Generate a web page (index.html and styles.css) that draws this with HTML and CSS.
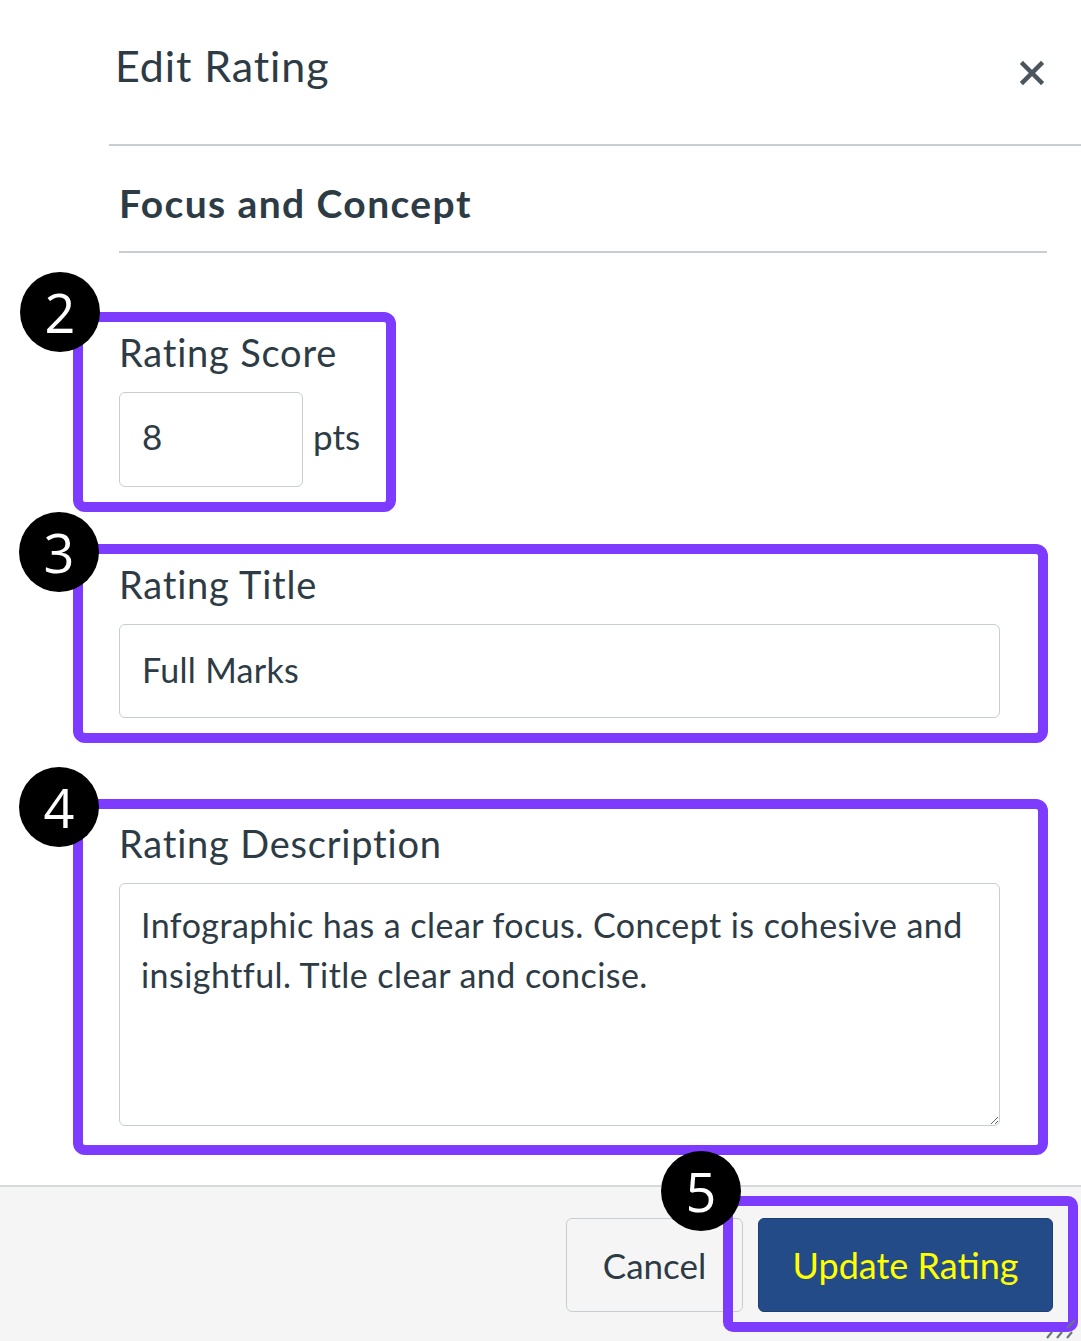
FILE: index.html
```html
<!DOCTYPE html>
<html lang="en">
<head>
    <meta charset="UTF-8">
    <title>Edit Rating</title>
    <link rel="stylesheet" href="styles.css">
</head>
<body>
    <div class="modal">
        <!-- Header -->
        <div class="modal-header">
            <h2 class="modal-title">Edit Rating</h2>
            <button class="close-button" aria-label="Close">
                <svg width="26" height="26" viewBox="0 0 26 26">
                    <path d="M4 4 L22 22 M22 4 L4 22" stroke="#4a555e" stroke-width="4.5" stroke-linecap="square" fill="none"/>
                </svg>
            </button>
        </div>

        <!-- Body -->
        <div class="modal-body">
            <h3 class="criterion">Focus and Concept</h3>

            <div class="field-group field-group--score">
                <span class="step step--top">2</span>
                <label class="field-label" for="score">Rating Score</label>
                <div class="score-row">
                    <input class="text-input score-input" id="score" type="text" value="8">
                    <span class="unit">pts</span>
                </div>
            </div>

            <div class="field-group field-group--title">
                <span class="step">3</span>
                <label class="field-label" for="title">Rating Title</label>
                <input class="text-input title-input" id="title" type="text" value="Full Marks">
            </div>

            <div class="field-group field-group--desc">
                <span class="step">4</span>
                <label class="field-label" for="desc">Rating Description</label>
                <textarea class="text-area" id="desc">Infographic has a clear focus. Concept is cohesive and insightful. Title clear and concise.</textarea>
            </div>
        </div>

        <!-- Footer -->
        <div class="modal-footer">
            <button class="btn btn-cancel">Cancel</button>
            <div class="primary-wrap">
                <span class="step step--footer">5</span>
                <button class="btn btn-primary">Update Rating</button>
                <span class="highlight"></span>
            </div>
            <svg class="grip" width="32" height="22" viewBox="0 0 32 22">
                <path d="M2 20 L7 14 M12 20 L17 14 M22 20 L27 14 M22 10 L30 2" stroke="#6b7780" stroke-width="2.2" fill="none"/>
            </svg>
        </div>
    </div>
</body>
</html>
```

FILE: styles.css
```css
* {
    margin: 0;
    padding: 0;
    box-sizing: border-box;
}

body {
    font-family: Lato, "Open Sans", sans-serif;
    color: #2d3b45;
    background: #fff;
    width: 1081px;
    height: 1341px;
    overflow: hidden;
}

.modal {
    display: flex;
    flex-direction: column;
    height: 100%;
}

/* Header */
.modal-header {
    display: flex;
    justify-content: space-between;
    align-items: flex-start;
    height: 146px;
    margin-left: 109px;
    padding: 40px 36px 0 6px;
    border-bottom: 2px solid #c7cdd1;
}

.modal-title {
    font-size: 43px;
    font-weight: 400;
    line-height: 1.2;
    letter-spacing: 0.9px;
}

.close-button {
    margin-top: 20px;
    width: 26px;
    height: 26px;
    background: none;
    border: none;
    cursor: pointer;
}

/* Body */
.criterion {
    margin: 0 34px 0 119px;
    padding: 35px 0 26px;
    font-size: 39px;
    font-weight: 700;
    line-height: 44px;
    letter-spacing: 1.4px;
    border-bottom: 2px solid #c7cdd1;
}

.field-group {
    position: relative;
    width: 975px;
    margin-left: 73px;
    padding: 8px 38px 15px 36px;
    border: 10px solid #7d3bff;
    border-radius: 12px;
}

.field-group--score {
    width: 323px;
    margin-top: 59px;
}

.field-group--title {
    margin-top: 32px;
}

.field-group--desc {
    margin-top: 56px;
    padding-top: 12px;
    padding-bottom: 19px;
}

.field-label {
    display: block;
    font-size: 38px;
    line-height: 44px;
    letter-spacing: 0.8px;
    margin-bottom: 18px;
}

.text-input {
    display: block;
    font-family: Lato, "Open Sans", sans-serif;
    color: #2d3b45;
    border: 1px solid #c7cdd1;
    border-radius: 6px;
    background: #fff;
    outline: none;
}

.score-row {
    display: flex;
    align-items: baseline;
}

.score-input {
    width: 184px;
    height: 95px;
    padding: 0 22px 8px;
    font-size: 35px;
}

.unit {
    margin-left: 10px;
    font-size: 35px;
}

.title-input {
    width: 100%;
    height: 94px;
    padding: 0 22px 4px;
    font-size: 34px;
    letter-spacing: 0.3px;
}

.text-area {
    display: block;
    width: 100%;
    height: 243px;
    padding: 16px 21px;
    font-family: Lato, "Open Sans", sans-serif;
    font-size: 34px;
    line-height: 50px;
    letter-spacing: 0.45px;
    color: #2d3b45;
    border: 1px solid #c7cdd1;
    border-radius: 6px;
    resize: vertical;
    outline: none;
}

/* Numbered callouts */
.step {
    position: absolute;
    left: -64px;
    top: -42px;
    width: 80px;
    height: 80px;
    border-radius: 50%;
    background: #000;
    color: #fff;
    font-family: "Open Sans", sans-serif;
    font-size: 54px;
    line-height: 1;
    display: flex;
    align-items: center;
    justify-content: center;
    z-index: 3;
}

.step--top {
    left: -63px;
    top: -50px;
}

.step--footer {
    left: -97px;
    top: -67px;
}

/* Footer */
.modal-footer {
    position: relative;
    flex: 1;
    display: flex;
    justify-content: flex-end;
    align-items: flex-start;
    gap: 15px;
    margin-top: 30px;
    padding: 31px 28px 0 0;
    background: #f5f5f5;
    border-top: 2px solid #d7dadd;
}

.btn {
    height: 94px;
    padding: 0;
    font-family: Lato, "Open Sans", sans-serif;
    font-size: 35px;
    white-space: nowrap;
    border-radius: 6px;
    cursor: pointer;
}

.btn-cancel {
    width: 177px;
    background: #f5f5f5;
    color: #2d3b45;
    border: 1px solid #c7cdd1;
}

.primary-wrap {
    position: relative;
    display: flex;
}

.btn-primary {
    width: 295px;
    font-size: 36px;
    background: #234b88;
    color: #ffff00;
    border: 1px solid #1d3f73;
}

.highlight {
    position: absolute;
    left: -35px;
    right: -25px;
    top: -22px;
    bottom: -20px;
    border: 10px solid #7d3bff;
    border-radius: 10px;
    pointer-events: none;
    z-index: 2;
}

.grip {
    position: absolute;
    right: 4px;
    bottom: 1px;
    z-index: 4;
}
```
